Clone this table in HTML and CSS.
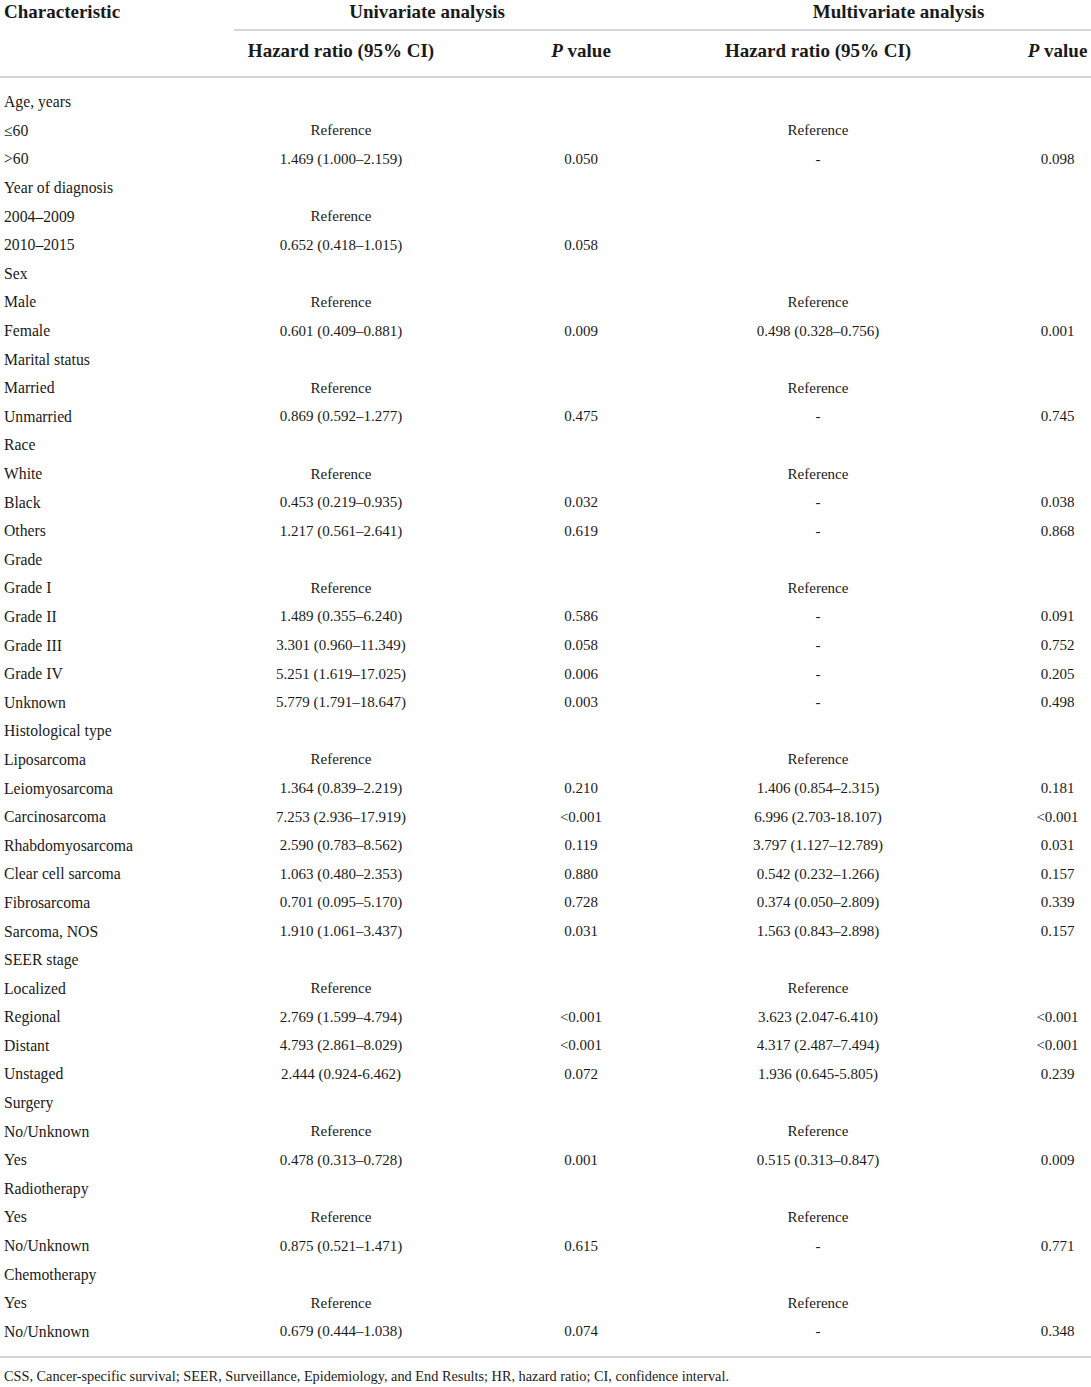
FILE: index.html
```html
<!DOCTYPE html>
<html lang="en">
<head>
    <meta charset="UTF-8">
    <title>Cox regression analysis</title>
    <link rel="stylesheet" href="styles.css">
</head>
<body>
    <table class="cox">
        <colgroup>
            <col class="c-name">
            <col class="c-hr">
            <col class="c-p">
            <col class="c-hr2">
            <col class="c-p2">
        </colgroup>
        <thead>
            <tr class="head-top">
                <th class="name">Characteristic</th>
                <th class="group uni" colspan="2">Univariate analysis</th>
                <th class="group multi" colspan="2">Multivariate analysis</th>
            </tr>
            <tr class="head-sub">
                <th></th>
                <th>Hazard ratio (95% CI)</th>
                <th><i>P</i> value</th>
                <th>Hazard ratio (95% CI)</th>
                <th class="last"><i>P</i> value</th>
            </tr>
        </thead>
        <tbody>
            <tr class="first"><td>Age, years</td><td></td><td></td><td></td><td class="last"></td></tr>
            <tr><td>≤60</td><td>Reference</td><td></td><td>Reference</td><td class="last"></td></tr>
            <tr><td>&gt;60</td><td>1.469 (1.000–2.159)</td><td>0.050</td><td>-</td><td class="last">0.098</td></tr>
            <tr><td>Year of diagnosis</td><td></td><td></td><td></td><td class="last"></td></tr>
            <tr><td>2004–2009</td><td>Reference</td><td></td><td></td><td class="last"></td></tr>
            <tr><td>2010–2015</td><td>0.652 (0.418–1.015)</td><td>0.058</td><td></td><td class="last"></td></tr>
            <tr><td>Sex</td><td></td><td></td><td></td><td class="last"></td></tr>
            <tr><td>Male</td><td>Reference</td><td></td><td>Reference</td><td class="last"></td></tr>
            <tr><td>Female</td><td>0.601 (0.409–0.881)</td><td>0.009</td><td>0.498 (0.328–0.756)</td><td class="last">0.001</td></tr>
            <tr><td>Marital status</td><td></td><td></td><td></td><td class="last"></td></tr>
            <tr><td>Married</td><td>Reference</td><td></td><td>Reference</td><td class="last"></td></tr>
            <tr><td>Unmarried</td><td>0.869 (0.592–1.277)</td><td>0.475</td><td>-</td><td class="last">0.745</td></tr>
            <tr><td>Race</td><td></td><td></td><td></td><td class="last"></td></tr>
            <tr><td>White</td><td>Reference</td><td></td><td>Reference</td><td class="last"></td></tr>
            <tr><td>Black</td><td>0.453 (0.219–0.935)</td><td>0.032</td><td>-</td><td class="last">0.038</td></tr>
            <tr><td>Others</td><td>1.217 (0.561–2.641)</td><td>0.619</td><td>-</td><td class="last">0.868</td></tr>
            <tr><td>Grade</td><td></td><td></td><td></td><td class="last"></td></tr>
            <tr><td>Grade I</td><td>Reference</td><td></td><td>Reference</td><td class="last"></td></tr>
            <tr><td>Grade II</td><td>1.489 (0.355–6.240)</td><td>0.586</td><td>-</td><td class="last">0.091</td></tr>
            <tr><td>Grade III</td><td>3.301 (0.960–11.349)</td><td>0.058</td><td>-</td><td class="last">0.752</td></tr>
            <tr><td>Grade IV</td><td>5.251 (1.619–17.025)</td><td>0.006</td><td>-</td><td class="last">0.205</td></tr>
            <tr><td>Unknown</td><td>5.779 (1.791–18.647)</td><td>0.003</td><td>-</td><td class="last">0.498</td></tr>
            <tr><td>Histological type</td><td></td><td></td><td></td><td class="last"></td></tr>
            <tr><td>Liposarcoma</td><td>Reference</td><td></td><td>Reference</td><td class="last"></td></tr>
            <tr><td>Leiomyosarcoma</td><td>1.364 (0.839–2.219)</td><td>0.210</td><td>1.406 (0.854–2.315)</td><td class="last">0.181</td></tr>
            <tr><td>Carcinosarcoma</td><td>7.253 (2.936–17.919)</td><td>&lt;0.001</td><td>6.996 (2.703-18.107)</td><td class="last">&lt;0.001</td></tr>
            <tr><td>Rhabdomyosarcoma</td><td>2.590 (0.783–8.562)</td><td>0.119</td><td>3.797 (1.127–12.789)</td><td class="last">0.031</td></tr>
            <tr><td>Clear cell sarcoma</td><td>1.063 (0.480–2.353)</td><td>0.880</td><td>0.542 (0.232–1.266)</td><td class="last">0.157</td></tr>
            <tr><td>Fibrosarcoma</td><td>0.701 (0.095–5.170)</td><td>0.728</td><td>0.374 (0.050–2.809)</td><td class="last">0.339</td></tr>
            <tr><td>Sarcoma, NOS</td><td>1.910 (1.061–3.437)</td><td>0.031</td><td>1.563 (0.843–2.898)</td><td class="last">0.157</td></tr>
            <tr><td>SEER stage</td><td></td><td></td><td></td><td class="last"></td></tr>
            <tr><td>Localized</td><td>Reference</td><td></td><td>Reference</td><td class="last"></td></tr>
            <tr><td>Regional</td><td>2.769 (1.599–4.794)</td><td>&lt;0.001</td><td>3.623 (2.047-6.410)</td><td class="last">&lt;0.001</td></tr>
            <tr><td>Distant</td><td>4.793 (2.861–8.029)</td><td>&lt;0.001</td><td>4.317 (2.487–7.494)</td><td class="last">&lt;0.001</td></tr>
            <tr><td>Unstaged</td><td>2.444 (0.924-6.462)</td><td>0.072</td><td>1.936 (0.645-5.805)</td><td class="last">0.239</td></tr>
            <tr><td>Surgery</td><td></td><td></td><td></td><td class="last"></td></tr>
            <tr><td>No/Unknown</td><td>Reference</td><td></td><td>Reference</td><td class="last"></td></tr>
            <tr><td>Yes</td><td>0.478 (0.313–0.728)</td><td>0.001</td><td>0.515 (0.313–0.847)</td><td class="last">0.009</td></tr>
            <tr><td>Radiotherapy</td><td></td><td></td><td></td><td class="last"></td></tr>
            <tr><td>Yes</td><td>Reference</td><td></td><td>Reference</td><td class="last"></td></tr>
            <tr><td>No/Unknown</td><td>0.875 (0.521–1.471)</td><td>0.615</td><td>-</td><td class="last">0.771</td></tr>
            <tr><td>Chemotherapy</td><td></td><td></td><td></td><td class="last"></td></tr>
            <tr><td>Yes</td><td>Reference</td><td></td><td>Reference</td><td class="last"></td></tr>
            <tr class="end"><td>No/Unknown</td><td>0.679 (0.444–1.038)</td><td>0.074</td><td>-</td><td class="last">0.348</td></tr>
        </tbody>
    </table>
    <p class="note">CSS, Cancer-specific survival; SEER, Surveillance, Epidemiology, and End Results; HR, hazard ratio; CI, confidence interval.</p>
</body>
</html>
```

FILE: styles.css
```css
body {
    margin: 0;
    padding: 0;
    background-color: #fff;
    color: #1a1a1a;
    font-family: "Liberation Serif", "DejaVu Serif", serif;
}
.cox {
    width: 1091px;
    table-layout: fixed;
    border-collapse: collapse;
}
.c-name { width: 234px; }
.c-hr { width: 214px; }
.c-p { width: 266px; }
.c-hr2 { width: 208px; }
.c-p2 { width: 169px; }

.cox th {
    font-size: 19px;
    font-weight: bold;
    text-align: center;
    padding: 0;
    white-space: nowrap;
}
.cox th i {
    font-style: italic;
}
.head-top th {
    height: 23px;
    padding-bottom: 6px;
    vertical-align: middle;
}
.head-top th.name {
    text-align: left;
    padding-left: 4px;
}
.head-top .group {
    border-bottom: 2px solid #d6d6d6;
}
.head-top .uni {
    padding-right: 94px;
}
.head-top .multi {
    padding-right: 8px;
}
.head-sub th {
    height: 40px;
    padding-bottom: 5px;
    border-bottom: 2px solid #d6d6d6;
}

.cox td {
    font-size: 15px;
    height: 28.6px;
    padding: 0;
    text-align: center;
    vertical-align: middle;
    white-space: nowrap;
}
.cox td:first-child {
    text-align: left;
    padding-left: 4px;
    font-size: 15.7px;
}
.cox .last {
    padding-left: 102px;
}
.cox tr.first td {
    padding-top: 10px;
}
.cox tr.end td {
    padding-bottom: 10px;
    border-bottom: 2px solid #d6d6d6;
}
.note {
    margin: 10px 0 0 4px;
    font-size: 14.3px;
}
```
